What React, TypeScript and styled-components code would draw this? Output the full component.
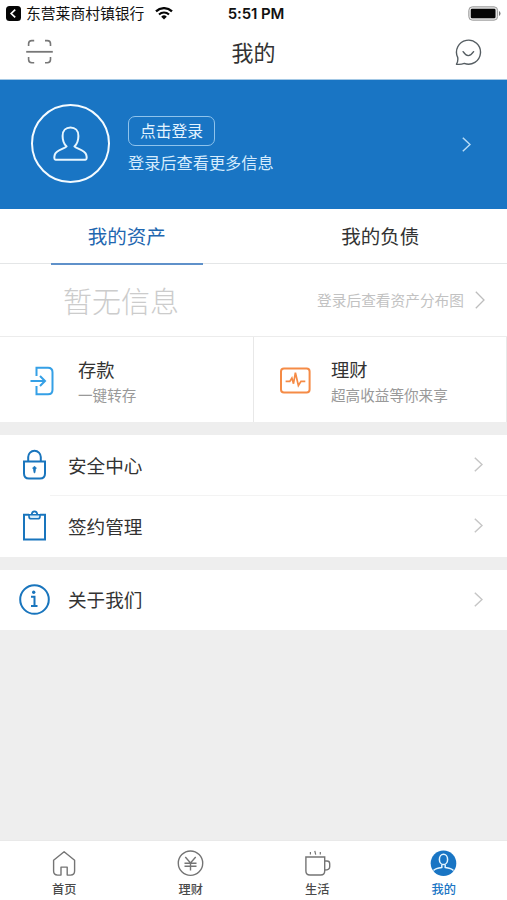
import React from "react";
import styled, { createGlobalStyle } from "styled-components";

const GlobalStyle = createGlobalStyle`
  *, *::before, *::after { box-sizing: border-box; }
  body {
    margin: 0;
    background: #eeeeee;
    font-family: "Noto Sans CJK SC", "Liberation Sans", sans-serif;
    color: #333333;
  }
  svg { display: block; flex: none; }
`;

const Screen = styled.div`
  display: flex;
  flex-direction: column;
  width: 507px;
  height: 900px;
  overflow: hidden;
  background: #eeeeee;
`;

const Text = styled.span<{ $size: number; $color?: string; $weight?: number }>`
  font-size: ${(p) => p.$size}px;
  line-height: 1.25;
  color: ${(p) => p.$color ?? "#333333"};
  font-weight: ${(p) => p.$weight ?? 400};
  white-space: nowrap;
`;

const StatusBar = styled.header`
  display: grid;
  grid-template-columns: 1fr auto 1fr;
  align-items: center;
  height: 27px;
  padding: 0 6px;
  background: #ffffff;
`;

const StatusLeft = styled.div`
  display: flex;
  align-items: center;
  gap: 5px;
  svg:last-child { margin-left: 6px; }
`;

const Clock = styled.time`
  font: 600 15px/18px Inter, sans-serif;
  color: #111111;
  letter-spacing: -0.1px;
  padding-left: 5px;
`;

const StatusRight = styled.div`
  display: flex;
  justify-content: flex-end;
`;

const NavBar = styled.div`
  display: grid;
  grid-template-columns: 1fr auto 1fr;
  align-items: center;
  height: 53px;
  padding: 0 25px 2px 26px;
  background: #ffffff;
  border-bottom: 1px solid #a3c8e5;
  > :nth-child(2) { margin-right: 1px; }
  > :last-child { justify-self: end; }
`;

const Hero = styled.section`
  display: flex;
  align-items: center;
  height: 129px;
  padding: 0 36px 1px 31px;
  background: #1975c4;
`;

const Avatar = styled.div`
  display: grid;
  place-items: center;
  width: 79px;
  height: 79px;
  margin: 0 18px 1px 0;
  border: 2.5px solid #f4fbff;
  border-radius: 50%;
`;

const LoginInfo = styled.div`
  display: flex;
  flex: 1;
  flex-direction: column;
  align-items: flex-start;
  gap: 6px;
`;

const LoginButton = styled.button`
  display: grid;
  place-items: center;
  width: 87px;
  height: 30px;
  padding: 0;
  font-family: inherit;
  background: none;
  border: 1px solid #8fc3ec;
  border-radius: 7px;
`;

const Tabs = styled.nav`
  position: relative;
  display: grid;
  grid-template-columns: 1fr 1fr;
  justify-items: center;
  height: 55px;
  background: #ffffff;
  box-shadow: inset 0 -1px #e4e6e7;
`;

const Tab = styled.div<{ $active?: boolean }>`
  display: grid;
  place-items: center;
  width: 152px;
  height: 56px;
  border-bottom: 2px solid ${(p) => (p.$active ? "#5f91ca" : "transparent")};
`;

const Summary = styled.section`
  display: flex;
  align-items: center;
  justify-content: space-between;
  height: 72px;
  padding: 0 22px 0 63px;
  background: #ffffff;
`;

const SummaryLink = styled.div`
  display: flex;
  align-items: center;
  gap: 11px;
`;

const Cards = styled.section`
  display: grid;
  grid-template-columns: 254px 253px;
  height: 86px;
  margin-bottom: 13px;
  background: #ffffff;
  border-top: 1px solid #ececec;
`;

const Card = styled.div`
  display: flex;
  align-items: center;
  padding-left: 26px;
  border-right: 1px solid #e8e8e8;
  & + & { padding-left: 25px; }
`;

const CardIcon = styled.div`
  display: grid;
  place-items: center;
  width: 32px;
  margin-right: 20px;
  padding-top: 2px;
`;

const CardCopy = styled.div`
  display: flex;
  flex-direction: column;
  gap: 5px;
  padding-top: 4px;
`;

const List = styled.section`
  display: flex;
  flex-direction: column;
  margin-bottom: 13px;
  background: #ffffff;
`;

const Row = styled.div<{ $height: number; $divided?: boolean }>`
  display: flex;
  align-items: center;
  height: ${(p) => p.$height}px;
  padding: 0 24px 2px 19px;
  background: linear-gradient(#f3f3f3, #f3f3f3) 50px 100% / 100% ${(p) => (p.$divided ? 1 : 0)}px no-repeat;
`;

const RowIcon = styled.div`
  display: grid;
  place-items: center;
  width: 31px;
  margin-right: 18px;
`;

const RowLabel = styled(Text)`
  flex: 1;
`;

const BottomBar = styled.nav`
  display: grid;
  grid-template-columns: repeat(4, 1fr);
  height: 60px;
  margin-top: auto;
  padding-left: 1px;
  background: #ffffff;
  border-top: 1px solid #e9e9e9;
`;

const BottomItem = styled.div`
  display: flex;
  flex-direction: column;
  align-items: center;
  gap: 5px;
  padding-top: 9px;
`;

const Chevron = ({ color, w = 9, h = 15, stroke = 1.5 }: { color: string; w?: number; h?: number; stroke?: number }) => (
  <svg width={w} height={h} viewBox={`0 0 ${w} ${h}`} fill="none" stroke={color} strokeWidth={stroke}>
    <path d={`M.8 .8 L${w - 1} ${h / 2} L.8 ${h - 0.8}`} />
  </svg>
);

const BackBadge = () => (
  <svg width="15" height="15" viewBox="0 0 15 15">
    <rect width="15" height="15" rx="3.5" fill="#050505" />
    <path d="M9.2 3.7 5.2 7.5l4 3.8" fill="none" stroke="#fff" strokeWidth="1.7" />
  </svg>
);

const Wifi = () => (
  <svg width="18" height="13" viewBox="0 0 18 13" fill="none" stroke="#050505">
    <path d="M1 4.3a11.7 11.7 0 0 1 16 0" strokeWidth="2.3" />
    <path d="M4 7.4a7.4 7.4 0 0 1 10 0" strokeWidth="2.1" />
    <path d="M6.2 9.7a4 4 0 0 1 5.6 0L9 12.5z" fill="#050505" stroke="none" />
  </svg>
);

const Battery = () => (
  <svg width="33" height="15" viewBox="0 0 33 15">
    <rect x=".8" y=".8" width="28.8" height="13.4" rx="3.6" fill="#e4e4e4" stroke="#9b9b9b" />
    <rect x="2.8" y="2.7" width="24.7" height="9.6" rx="1.4" fill="#050505" />
    <path d="M31 5v5q1.5-.8 1.5-2.5T31 5z" fill="#777" />
  </svg>
);

const ScanIcon = () => (
  <svg width="28" height="26" viewBox="0 0 28 26" fill="none" stroke="#777" strokeWidth="1.6">
    <path d="M2.6 7V4.8Q2.6 1.6 5.8 1.6h2.4M19 1.6h2.3q3.2 0 3.2 3.2V7M2.6 18v2.6q0 3.2 3.2 3.2h2.4M19 23.8h2.3q3.2 0 3.2-3.2V18" />
    <path d="M.2 12.8h26.6" strokeWidth="1.8" />
  </svg>
);

const ChatIcon = () => (
  <svg width="27" height="27" viewBox="0 0 27 27" fill="none" stroke="#555d62" strokeWidth="1.4" strokeLinejoin="round" strokeLinecap="round">
    <path d="M2.7 18.4A12 12 0 1 1 9.3 24.4Q5.7 25.8 1.5 25.2Q3.3 22.5 2.7 18.4z" />
    <path d="M8.1 12.7q5.1 7.8 10.5 0" />
  </svg>
);

const PersonIcon = () => (
  <svg width="35" height="35" viewBox="0 0 35 35" fill="none" stroke="#e6f6ff" strokeWidth="2" strokeLinejoin="round">
    <path d="M13.6 20.4C11.2 18.2 9.6 14.4 9.6 9.9C9.6 4.7 12.8 1.6 17.5 1.6s7.9 3.1 7.9 8.3c0 4.5-1.6 8.3-4 10.5c2 2.4 10.2 3.6 11.7 8c.8 2.5 1 5.3-.7 5.3H2.6c-1.7 0-1.5-2.8-.7-5.3c1.5-4.4 9.7-5.6 11.7-8z" />
  </svg>
);

const DepositIcon = () => (
  <svg width="25" height="30" viewBox="0 0 25 30" fill="none" stroke="#35a0e6" strokeWidth="2">
    <path d="M6.5 10V1.8h11.5q4.5 0 4.5 4.5v17.4q0 4.5-4.5 4.5H6.5V20" />
    <path d="M.5 15h14M10 10l5 5-5 5" />
  </svg>
);

const WealthIcon = () => (
  <svg width="31" height="27" viewBox="0 0 31 27" fill="none" stroke="#f58b46" strokeWidth="2">
    <rect x="1" y="1.5" width="28.6" height="24" rx="3" />
    <path d="M5.6 14.4h4.2l2.1-3.3 1.6 5.6 1.9-11 3 12.8 2.6-4.1h4.3" strokeWidth="1.7" />
  </svg>
);

const LockIcon = () => (
  <svg width="25" height="31" viewBox="0 0 25 31" fill="none" stroke="#1975bd" strokeWidth="2">
    <path d="M2 12.4h21v12.2q0 5-5 5H7q-5 0-5-5zM6.2 12V8.1a6.3 6.3 0 0 1 12.6 0V12" />
    <path d="m12.5 17.2 1.8 1.8-.9 1.6-.5 3.2h-.8l-.5-3.2-.9-1.6z" fill="#1975bd" strokeWidth=".8" />
  </svg>
);

const ClipboardIcon = () => (
  <svg width="25" height="31" viewBox="0 0 25 31" fill="none" stroke="#1975bd" strokeWidth="2">
    <path d="M7 4.8H2v24.8h21V4.8h-5" />
    <path d="M7 4.8h11v1.6q0 2.4-2.4 2.4H9.4Q7 8.8 7 6.4z" fill="#d6ebf8" strokeWidth="1.6" />
    <path d="M9.6 4.8Q9.9 1.3 12.5 1.3T15.4 4.8" strokeWidth="1.7" />
  </svg>
);

const InfoIcon = () => (
  <svg width="31" height="31" viewBox="0 0 31 31" fill="none" stroke="#1975bd" strokeWidth="2">
    <circle cx="15.5" cy="15.5" r="14.3" />
    <circle cx="14.7" cy="8.2" r="1.7" fill="#1975bd" stroke="none" />
    <path d="M12 12.7h3.5v9.2M12 22.1h6.5" />
  </svg>
);

const HomeIcon = () => (
  <svg width="26" height="27" viewBox="0 0 26 27" fill="none" stroke="#747474" strokeWidth="1.4" strokeLinejoin="round">
    <path d="M2.6 10.3 13.1 1.8 23.6 10.3v10.8q0 4-4 4h-3.4v-8H10v8H6.6q-4 0-4-4z" />
  </svg>
);

const YuanIcon = () => (
  <svg width="27" height="27" viewBox="0 0 27 27" fill="none" stroke="#747474" strokeWidth="1.4">
    <circle cx="13.5" cy="13.2" r="12.2" />
    <path d="m8.3 7 5.2 6 5.2-6M7.5 13.3h12M7.5 16.3h12M13.5 13v7.5" />
  </svg>
);

const CupIcon = () => (
  <svg width="27" height="27" viewBox="0 0 27 27" fill="none" stroke="#747474" strokeWidth="1.4">
    <path d="M1.9 7h18.8v14q0 4-4 4H5.9q-4 0-4-4zM20.7 11H23q2.7 0 2.7 2.7v3q0 3.3-5 3.3" />
    <path d="M6.4 2v2.6M10.8.8l.9 3.8M16.3 2v2.6" strokeWidth="1.2" />
  </svg>
);

const ProfileIcon = () => (
  <svg width="27" height="27" viewBox="0 0 27 27" fill="none" stroke="#e4f5ff" strokeWidth="1.5">
    <circle cx="13.5" cy="13.2" r="12.8" fill="#1975c4" stroke="none" />
    <ellipse cx="13.5" cy="9.4" rx="4.1" ry="5.2" />
    <path d="M3.5 20.4Q5.5 18.2 11.8 17.4V14.6M15.2 14.6v2.8q6.3.8 8.3 3" />
  </svg>
);

const navItems = [
  { label: "首页", icon: <HomeIcon /> },
  { label: "理财", icon: <YuanIcon /> },
  { label: "生活", icon: <CupIcon /> },
  { label: "我的", icon: <ProfileIcon />, active: true },
];

export default function App() {
  return (
    <>
      <GlobalStyle />
      <Screen>
        <StatusBar>
          <StatusLeft>
            <BackBadge />
            <Text $size={14.8} $color="#111">东营莱商村镇银行</Text>
            <Wifi />
          </StatusLeft>
          <Clock>5:51 PM</Clock>
          <StatusRight><Battery /></StatusRight>
        </StatusBar>

        <NavBar>
          <ScanIcon />
          <Text $size={22}>我的</Text>
          <ChatIcon />
        </NavBar>

        <Hero>
          <Avatar><PersonIcon /></Avatar>
          <LoginInfo>
            <LoginButton><Text $size={15.8} $color="#e4f4ff">点击登录</Text></LoginButton>
            <Text $size={16.2} $color="#d6ecfd">登录后查看更多信息</Text>
          </LoginInfo>
          <Chevron color="#b8dcf7" />
        </Hero>

        <Tabs>
          <Tab $active><Text $size={19.5} $color="#1f67b0">我的资产</Text></Tab>
          <Tab><Text $size={19.5}>我的负债</Text></Tab>
        </Tabs>

        <Summary>
          <Text $size={29} $color="#cccccc" $weight={300}>暂无信息</Text>
          <SummaryLink>
            <Text $size={14.7} $color="#c2c2c2">登录后查看资产分布图</Text>
            <Chevron color="#bdbdbd" w={10} h={18} stroke={1.3} />
          </SummaryLink>
        </Summary>

        <Cards>
          <Card>
            <CardIcon><DepositIcon /></CardIcon>
            <CardCopy>
              <Text $size={18.3}>存款</Text>
              <Text $size={14.6} $color="#999">一键转存</Text>
            </CardCopy>
          </Card>
          <Card>
            <CardIcon><WealthIcon /></CardIcon>
            <CardCopy>
              <Text $size={18.3}>理财</Text>
              <Text $size={14.6} $color="#999">超高收益等你来享</Text>
            </CardCopy>
          </Card>
        </Cards>

        <List>
          <Row $height={61} $divided>
            <RowIcon><LockIcon /></RowIcon>
            <RowLabel $size={18.6}>安全中心</RowLabel>
            <Chevron color="#c6c6c6" />
          </Row>
          <Row $height={61}>
            <RowIcon><ClipboardIcon /></RowIcon>
            <RowLabel $size={18.6}>签约管理</RowLabel>
            <Chevron color="#c6c6c6" />
          </Row>
        </List>

        <List>
          <Row $height={60}>
            <RowIcon><InfoIcon /></RowIcon>
            <RowLabel $size={18.6}>关于我们</RowLabel>
            <Chevron color="#c6c6c6" />
          </Row>
        </List>

        <BottomBar>
          {navItems.map((item) => (
            <BottomItem key={item.label}>
              {item.icon}
              <Text $size={12.2} $weight={500} $color={item.active ? "#1975c4" : "#4a4a4a"}>{item.label}</Text>
            </BottomItem>
          ))}
        </BottomBar>
      </Screen>
    </>
  );
}
